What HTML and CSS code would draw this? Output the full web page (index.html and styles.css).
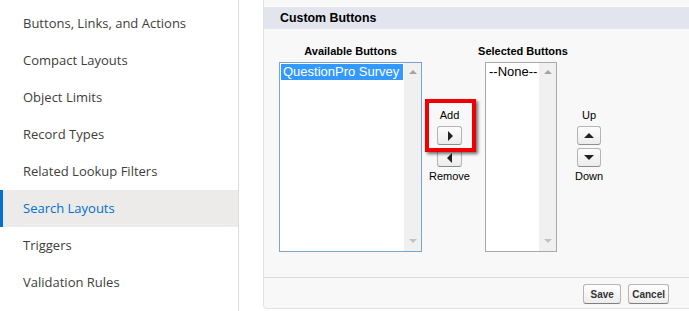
FILE: index.html
```html
<!DOCTYPE html>
<html lang="en">
<head>
    <meta charset="UTF-8">
    <title>Search Layouts - Custom Buttons</title>
    <link rel="stylesheet" href="styles.css">
</head>
<body>
    <div class="page">
        <div class="sidebar">
            <div class="nav-item">Buttons, Links, and Actions</div>
            <div class="nav-item">Compact Layouts</div>
            <div class="nav-item">Object Limits</div>
            <div class="nav-item">Record Types</div>
            <div class="nav-item">Related Lookup Filters</div>
            <div class="nav-item active">Search Layouts</div>
            <div class="nav-item">Triggers</div>
            <div class="nav-item">Validation Rules</div>
        </div>

        <div class="main">
            <div class="panel">
                <div class="panel-top"></div>
                <div class="section-header">Custom Buttons</div>

                <div class="duel">
                    <div class="list-col available-col">
                        <div class="list-label">Available Buttons</div>
                        <div class="listbox focused">
                            <div class="options">
                                <div class="option selected">QuestionPro Survey</div>
                            </div>
                            <div class="scroll">
                                <span class="tri tri-up"></span>
                                <span class="tri tri-down"></span>
                            </div>
                        </div>
                    </div>

                    <div class="arrow-col add-col">
                        <div class="arrow-label">Add</div>
                        <button class="arrow-btn"><span class="arrow arrow-right"></span></button>
                        <button class="arrow-btn"><span class="arrow arrow-left"></span></button>
                        <div class="arrow-label">Remove</div>
                        <div class="highlight"></div>
                    </div>

                    <div class="list-col selected-col">
                        <div class="list-label">Selected Buttons</div>
                        <div class="listbox">
                            <div class="options">
                                <div class="option">--None--</div>
                            </div>
                            <div class="scroll">
                                <span class="tri tri-up"></span>
                                <span class="tri tri-down"></span>
                            </div>
                        </div>
                    </div>

                    <div class="arrow-col order-col">
                        <div class="arrow-label">Up</div>
                        <button class="arrow-btn"><span class="arrow arrow-up"></span></button>
                        <button class="arrow-btn"><span class="arrow arrow-down"></span></button>
                        <div class="arrow-label">Down</div>
                    </div>
                </div>

                <div class="panel-footer">
                    <button class="btn">Save</button>
                    <button class="btn">Cancel</button>
                </div>
            </div>
        </div>
    </div>
</body>
</html>
```

FILE: styles.css
```css
* {
    margin: 0;
    padding: 0;
    box-sizing: border-box;
}

body {
    background: #fff;
    font-family: Arial, "Liberation Sans", sans-serif;
    color: #000;
    overflow: hidden;
}

.page {
    display: flex;
    height: 311px;
}

/* left setup menu */
.sidebar {
    width: 239px;
    flex-shrink: 0;
    border-right: 1px solid #dddbda;
    padding-top: 5px;
}

.nav-item {
    height: 37px;
    line-height: 37px;
    padding-left: 23px;
    font-family: "Open Sans", sans-serif;
    font-size: 13px;
    color: #3e3e3c;
    border-left: 3px solid transparent;
    text-indent: -3px;
}

.nav-item.active {
    background: #ecebea;
    border-left-color: #0070d2;
    color: #0070d2;
}

.main {
    flex: 1;
    padding-left: 24px;
    margin-right: -6px;
}

.panel {
    height: 309px;
    background: #f8f8f8;
    border: 1px solid #e3e3e3;
    border-top: none;
    border-radius: 0 0 4px 4px;
}

.panel-top {
    height: 7px;
    border-bottom: 1px solid #fff;
}

.section-header {
    height: 22px;
    line-height: 22px;
    background: #e2e5ee;
    padding-left: 16px;
    font-weight: bold;
    font-size: 12.4px;
    color: #000;
}

/* dueling picklists */
.duel {
    display: flex;
    align-items: flex-start;
    padding: 16px 0 0 15px;
    height: 249px;
    border-bottom: 1px solid #dcdcdc;
}

.list-label {
    font-weight: bold;
    font-size: 11px;
    text-align: center;
    white-space: nowrap;
    height: 17px;
    line-height: 13px;
    color: #000;
}

.available-col {
    width: 143px;
}

.selected-col {
    width: 72px;
    margin-left: 23px;
}

.selected-col .list-label {
    margin: 0 -20px 0 -16px;
}

.listbox {
    height: 190px;
    display: flex;
    background: #fff;
    border: 1px solid #a9a9a9;
}

.listbox.focused {
    border-color: #7da2ce;
}

.options {
    flex: 1;
    padding: 1px;
    overflow: hidden;
}

.option {
    font-size: 13px;
    line-height: 16px;
    height: 16px;
    padding-left: 2px;
    white-space: nowrap;
}

.option.selected {
    background: #3399ff;
    color: #fff;
}

.scroll {
    width: 17px;
    background: #f0f0f0;
    display: flex;
    flex-direction: column;
    justify-content: space-between;
    align-items: center;
    padding: 7px 0 8px;
}

.tri {
    width: 0;
    height: 0;
    border-left: 4px solid transparent;
    border-right: 4px solid transparent;
}

.tri-up {
    border-bottom: 4px solid #a3a3a3;
}

.tri-down {
    border-top: 4px solid #c2c2c2;
}

/* add / remove and up / down */
.arrow-col {
    position: relative;
    width: 25px;
    display: flex;
    flex-direction: column;
    align-items: center;
    gap: 3px;
    padding-top: 64px;
}

.add-col {
    margin-left: 15px;
}

.order-col {
    margin-left: 20px;
    width: 24px;
}

.arrow-label {
    font-size: 11px;
    line-height: 13px;
    white-space: nowrap;
}

.arrow-col .arrow-label:first-child {
    margin-bottom: 1px;
}

.arrow-btn {
    width: 25px;
    height: 19px;
    border: 1px solid #b5b5b5;
    border-bottom-color: #8d8d8d;
    border-radius: 3px;
    background: linear-gradient(#fdfdfd, #ececec);
    display: flex;
    align-items: center;
    justify-content: center;
}

.order-col .arrow-btn {
    width: 24px;
}

.arrow {
    width: 0;
    height: 0;
}

.arrow-right {
    border-top: 5px solid transparent;
    border-bottom: 5px solid transparent;
    border-left: 5px solid #222;
    margin-left: 1px;
}

.arrow-left {
    border-top: 5px solid transparent;
    border-bottom: 5px solid transparent;
    border-right: 5px solid #222;
}

.arrow-up {
    border-left: 5px solid transparent;
    border-right: 5px solid transparent;
    border-bottom: 5px solid #222;
}

.arrow-down {
    border-left: 5px solid transparent;
    border-right: 5px solid transparent;
    border-top: 5px solid #222;
}

/* red annotation box drawn over the Add button */
.highlight {
    position: absolute;
    left: -12px;
    top: 54px;
    width: 51px;
    height: 53px;
    border: 4px solid #f00000;
    box-shadow: 2px 2px 3px rgba(0, 0, 0, 0.55);
}

.panel-footer {
    display: flex;
    justify-content: flex-end;
    gap: 7px;
    padding: 6px 25px 0 0;
}

.btn {
    height: 20px;
    min-width: 38px;
    padding: 0 3px;
    font-family: Arial, "Liberation Sans", sans-serif;
    font-weight: bold;
    font-size: 10px;
    color: #333;
    border: 1px solid #b5b5b5;
    border-bottom-color: #7f7f7f;
    border-radius: 3px;
    background: linear-gradient(#ffffff, #ededed);
}
```
